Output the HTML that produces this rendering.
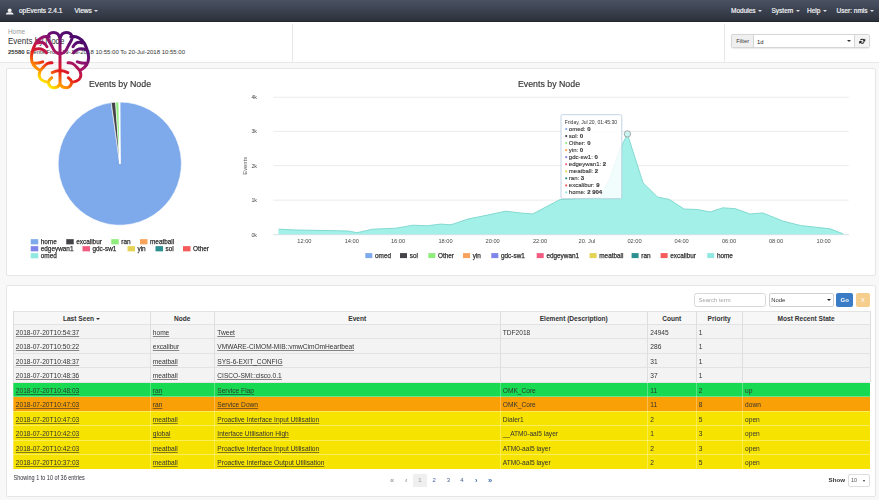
<!DOCTYPE html>
<html><head><meta charset="utf-8">
<style>
*{box-sizing:border-box;margin:0;padding:0}
html,body{width:879px;height:500px;overflow:hidden;background:#f8f8f8;font-family:"Liberation Sans",sans-serif;color:#333}
.a{position:absolute;white-space:nowrap}
#nav{position:absolute;left:0;top:0;width:879px;height:21.6px;background:linear-gradient(#4a5263,#2c313b);border-bottom:1.6px solid #22262e}
#nav .t{position:absolute;top:7.2px;color:#f2f3f5;font-size:6.5px;font-weight:normal;-webkit-text-stroke:0.2px #f2f3f5;white-space:nowrap;line-height:8px}
.caret{display:inline-block;width:0;height:0;border-left:2px solid transparent;border-right:2px solid transparent;border-top:2px solid #ddd;vertical-align:middle;margin-left:2.5px;margin-top:0px}
#hdr{position:absolute;left:0;top:22px;width:879px;height:40.5px;background:#fff;border-bottom:1px solid #e8e8e8}
.panel{position:absolute;background:#fff;border:1px solid #e6e6e6;border-radius:2px}
.row{position:absolute;left:13px;width:857px;height:14.5px}
.cell{position:absolute;top:0;height:100%;font-size:6.6px;line-height:14.5px;white-space:nowrap;color:#333}
.u{text-decoration:underline;text-decoration-color:rgba(40,40,40,0.55)}
.vl{position:absolute;width:1px;background:#dedede}
.hl{position:absolute;height:1px;left:13px;width:857px;background:#e0e0e0}
</style></head><body><div id="wrap" style="position:absolute;left:0;top:0;width:879px;height:500px;filter:blur(0.3px)">

<div id="nav">
<svg class="a" style="left:5px;top:7px" width="10" height="9" viewBox="0 0 10 9"><circle cx="4.7" cy="3.3" r="1.9" fill="#f0f0f0"/><path d="M0.8 7.6Q1 5.4 3.2 5.2h3Q8.4 5.4 8.7 7.6z" fill="#f0f0f0"/></svg>
<div class="t" style="left:19px">opEvents 2.4.1</div>
<div class="t" style="left:74.5px">Views<span class="caret"></span></div>
<div class="t" style="left:731px">Modules<span class="caret"></span></div>
<div class="t" style="left:771.5px">System<span class="caret"></span></div>
<div class="t" style="left:807px">Help<span class="caret"></span></div>
<div class="t" style="left:836.5px">User: nmis<span class="caret"></span></div>
</div>
<div id="hdr">
<div class="a" style="left:8px;top:6px;font-size:6.4px;color:#9a9a9a">Home</div>
<div class="a" style="left:8px;top:15px;font-size:8px;color:#333;transform:scaleY(1.18);transform-origin:0 80%">Events by Node</div>
<div class="a" style="left:8px;top:27.3px;font-size:6px;color:#333"><b>25580</b> Events From 19-Jul-2018 10:55:00 To 20-Jul-2018 10:55:00</div>
<div class="a" style="left:292px;top:2px;width:1px;height:38px;background:#e8e8e8"></div>
<div class="a" style="left:724px;top:2px;width:1px;height:38px;background:#e8e8e8"></div>
<div class="a" style="left:731px;top:12.4px;width:139px;height:13.9px;border:1px solid #d6d6d6;border-radius:2px;background:#fff;box-shadow:0 0.5px 1px rgba(0,0,0,.08)"></div>
<div class="a" style="left:732px;top:13.4px;width:21.5px;height:11.9px;background:#efefef;border-right:1px solid #d6d6d6"></div>
<div class="a" style="left:736.2px;top:15.9px;font-size:5.8px;color:#3a3a3a">Filter</div>
<div class="a" style="left:757px;top:16.6px;font-size:5.8px;color:#222">1d</div>
<div class="a" style="left:846.8px;top:18.3px;width:0;height:0;border-left:2px solid transparent;border-right:2px solid transparent;border-top:2.5px solid #333"></div>
<div class="a" style="left:854px;top:13.4px;width:15px;height:11.9px;background:#f4f4f4;border-left:1px solid #d6d6d6"></div>
<svg class="a" style="left:859px;top:16.4px" width="6.5" height="6.5" viewBox="0 0 10 10"><path d="M8.2 4.2A3.4 3.4 0 0 0 2.3 3.2M1.8 5.8A3.4 3.4 0 0 0 7.7 6.8" fill="none" stroke="#222" stroke-width="1.7"/><path d="M9.6 0.8v4.4H5.2zM0.4 9.2V4.8h4.4z" fill="#222"/></svg>
</div>
<div class="panel" style="left:5.8px;top:68px;width:870.5px;height:208px"></div>
<div class="panel" style="left:5.8px;top:285px;width:870.5px;height:212px"></div>
<svg class="a" style="left:0;top:0" width="879" height="500" viewBox="0 0 879 500" font-family="Liberation Sans">
<text x="120" y="87" font-size="8.8" fill="#333" stroke="#333" stroke-width="0.15" text-anchor="middle">Events by Node</text>
<path d="M119.8 163.6L119.80 102.00A61.6 61.6 0 1 1 111.23 102.60Z" fill="#7eaaec" stroke="#fff" stroke-width="0.6" stroke-linejoin="round"/>
<path d="M119.8 163.6L111.23 102.60A61.6 61.6 0 0 1 115.61 102.14Z" fill="#434348" stroke="#fff" stroke-width="0.6" stroke-linejoin="round"/>
<path d="M119.8 163.6L115.61 102.14A61.6 61.6 0 0 1 119.05 102.00Z" fill="#90ed7d" stroke="#fff" stroke-width="0.6" stroke-linejoin="round"/>
<path d="M119.8 163.6L119.05 102.00A61.6 61.6 0 0 1 119.26 102.00Z" fill="#f7a35c" stroke="#fff" stroke-width="0.6" stroke-linejoin="round"/>
<path d="M119.8 163.6L119.26 102.00A61.6 61.6 0 0 1 119.48 102.00Z" fill="#8085e9" stroke="#fff" stroke-width="0.6" stroke-linejoin="round"/>
<path d="M119.8 163.6L119.48 102.00A61.6 61.6 0 0 1 119.64 102.00Z" fill="#f15c80" stroke="#fff" stroke-width="0.6" stroke-linejoin="round"/>
<path d="M119.8 163.6L119.64 102.00A61.6 61.6 0 0 1 119.80 102.00Z" fill="#91e8e1" stroke="#fff" stroke-width="0.6" stroke-linejoin="round"/>
<rect x="30.75" y="239.15" width="7.5" height="5.2" fill="#7eaaec"/>
<text x="40.75" y="244.05" font-size="6.4" fill="#333" stroke="#333" stroke-width="0.25">home</text>
<rect x="66.25" y="239.15" width="7.5" height="5.2" fill="#434348"/>
<text x="76.25" y="244.05" font-size="6.4" fill="#333" stroke="#333" stroke-width="0.25">excalibur</text>
<rect x="111.25" y="239.15" width="7.5" height="5.2" fill="#90ed7d"/>
<text x="121.25" y="244.05" font-size="6.4" fill="#333" stroke="#333" stroke-width="0.25">ran</text>
<rect x="140" y="239.15" width="7.5" height="5.2" fill="#f7a35c"/>
<text x="150.00" y="244.05" font-size="6.4" fill="#333" stroke="#333" stroke-width="0.25">meatball</text>
<rect x="30.75" y="246.15" width="7.5" height="5.2" fill="#8085e9"/>
<text x="40.75" y="251.05" font-size="6.4" fill="#333" stroke="#333" stroke-width="0.25">edgeywan1</text>
<rect x="82.5" y="246.15" width="7.5" height="5.2" fill="#f15c80"/>
<text x="92.50" y="251.05" font-size="6.4" fill="#333" stroke="#333" stroke-width="0.25">gdc-sw1</text>
<rect x="127.5" y="246.15" width="7.5" height="5.2" fill="#e4d354"/>
<text x="137.50" y="251.05" font-size="6.4" fill="#333" stroke="#333" stroke-width="0.25">yin</text>
<rect x="155.5" y="246.15" width="7.5" height="5.2" fill="#2b908f"/>
<text x="165.50" y="251.05" font-size="6.4" fill="#333" stroke="#333" stroke-width="0.25">sol</text>
<rect x="183" y="246.15" width="7.5" height="5.2" fill="#f45b5b"/>
<text x="193.00" y="251.05" font-size="6.4" fill="#333" stroke="#333" stroke-width="0.25">Other</text>
<rect x="30.75" y="253.15" width="7.5" height="5.2" fill="#91e8e1"/>
<text x="40.75" y="258.05" font-size="6.4" fill="#333" stroke="#333" stroke-width="0.25">omed</text>
<text x="549" y="87" font-size="8.8" fill="#333" stroke="#333" stroke-width="0.15" text-anchor="middle">Events by Node</text>
<rect x="273.3" y="234.2" width="575.5" height="0.8" fill="#e6e6e6"/>
<text x="257" y="236.6" font-size="5.3" fill="#4a4a4a" text-anchor="end">0k</text>
<rect x="273.3" y="199.7" width="575.5" height="0.8" fill="#e6e6e6"/>
<text x="257" y="202.1" font-size="5.3" fill="#4a4a4a" text-anchor="end">1k</text>
<rect x="273.3" y="165.3" width="575.5" height="0.8" fill="#e6e6e6"/>
<text x="257" y="167.7" font-size="5.3" fill="#4a4a4a" text-anchor="end">2k</text>
<rect x="273.3" y="130.9" width="575.5" height="0.8" fill="#e6e6e6"/>
<text x="257" y="133.3" font-size="5.3" fill="#4a4a4a" text-anchor="end">3k</text>
<rect x="273.3" y="96.8" width="575.5" height="0.8" fill="#e6e6e6"/>
<text x="257" y="99.2" font-size="5.3" fill="#4a4a4a" text-anchor="end">4k</text>
<text transform="translate(246.5 165.8) rotate(-90)" font-size="5.8" fill="#555" text-anchor="middle">Events</text>
<path d="M278.3 234.7 L278.5 229.2 L297 230 L330 230.6 L348.5 231 L357 232.7 L372.4 229.2 L396 228.2 L413 225.2 L427 225.8 L440.6 224.1 L451 224.8 L468 219 L485 215.6 L505.5 211.2 L522.6 213.2 L532.8 213.9 L560 199.6 L600 197.5 L609.5 179 L619 151.6 L627.4 133.9 L643 182.7 L657.5 197 L669.5 199.5 L684 209 L697.6 209.5 L710 212 L722.8 207.8 L735.4 208.7 L750 214 L762.7 212.9 L783.7 221.3 L800.5 225.5 L830 228.8 L843.4 233.9 L843.4 234.7Z" fill="#a3f0e8"/>
<path d="M278.5 229.2 L297 230 L330 230.6 L348.5 231 L357 232.7 L372.4 229.2 L396 228.2 L413 225.2 L427 225.8 L440.6 224.1 L451 224.8 L468 219 L485 215.6 L505.5 211.2 L522.6 213.2 L532.8 213.9 L560 199.6 L600 197.5 L609.5 179 L619 151.6 L627.4 133.9 L643 182.7 L657.5 197 L669.5 199.5 L684 209 L697.6 209.5 L710 212 L722.8 207.8 L735.4 208.7 L750 214 L762.7 212.9 L783.7 221.3 L800.5 225.5 L830 228.8 L843.4 233.9" fill="none" stroke="#7ad6cc" stroke-width="0.9"/>
<rect x="273.3" y="234.4" width="575.5" height="0.8" fill="#d5dfea"/>
<text x="304.4" y="243.1" font-size="5.7" fill="#4a4a4a" text-anchor="middle">12:00</text>
<text x="351.8" y="243.1" font-size="5.7" fill="#4a4a4a" text-anchor="middle">14:00</text>
<text x="398" y="243.1" font-size="5.7" fill="#4a4a4a" text-anchor="middle">16:00</text>
<text x="445.5" y="243.1" font-size="5.7" fill="#4a4a4a" text-anchor="middle">18:00</text>
<text x="492.6" y="243.1" font-size="5.7" fill="#4a4a4a" text-anchor="middle">20:00</text>
<text x="540" y="243.1" font-size="5.7" fill="#4a4a4a" text-anchor="middle">22:00</text>
<text x="587" y="243.1" font-size="5.7" fill="#4a4a4a" text-anchor="middle">20. Jul</text>
<text x="634.5" y="243.1" font-size="5.7" fill="#4a4a4a" text-anchor="middle">02:00</text>
<text x="681.6" y="243.1" font-size="5.7" fill="#4a4a4a" text-anchor="middle">04:00</text>
<text x="729" y="243.1" font-size="5.7" fill="#4a4a4a" text-anchor="middle">06:00</text>
<text x="776" y="243.1" font-size="5.7" fill="#4a4a4a" text-anchor="middle">08:00</text>
<text x="823.6" y="243.1" font-size="5.7" fill="#4a4a4a" text-anchor="middle">10:00</text>
<rect x="365.3" y="253.1" width="7" height="5" fill="#7eaaec"/>
<text x="375.00" y="258.1" font-size="6.4" fill="#333" stroke="#333" stroke-width="0.25">omed</text>
<rect x="400" y="253.1" width="7" height="5" fill="#434348"/>
<text x="409.70" y="258.1" font-size="6.4" fill="#333" stroke="#333" stroke-width="0.25">sol</text>
<rect x="428.3" y="253.1" width="7" height="5" fill="#90ed7d"/>
<text x="438.00" y="258.1" font-size="6.4" fill="#333" stroke="#333" stroke-width="0.25">Other</text>
<rect x="463" y="253.1" width="7" height="5" fill="#f7a35c"/>
<text x="472.70" y="258.1" font-size="6.4" fill="#333" stroke="#333" stroke-width="0.25">yin</text>
<rect x="491.3" y="253.1" width="7" height="5" fill="#8085e9"/>
<text x="501.00" y="258.1" font-size="6.4" fill="#333" stroke="#333" stroke-width="0.25">gdc-sw1</text>
<rect x="536.7" y="253.1" width="7" height="5" fill="#f15c80"/>
<text x="546.40" y="258.1" font-size="6.4" fill="#333" stroke="#333" stroke-width="0.25">edgeywan1</text>
<rect x="589.6" y="253.1" width="7" height="5" fill="#e4d354"/>
<text x="599.30" y="258.1" font-size="6.4" fill="#333" stroke="#333" stroke-width="0.25">meatball</text>
<rect x="631.6" y="253.1" width="7" height="5" fill="#2b908f"/>
<text x="641.30" y="258.1" font-size="6.4" fill="#333" stroke="#333" stroke-width="0.25">ran</text>
<rect x="660.6" y="253.1" width="7" height="5" fill="#f45b5b"/>
<text x="670.30" y="258.1" font-size="6.4" fill="#333" stroke="#333" stroke-width="0.25">excalibur</text>
<rect x="707.2" y="253.1" width="7" height="5" fill="#91e8e1"/>
<text x="716.90" y="258.1" font-size="6.4" fill="#333" stroke="#333" stroke-width="0.25">home</text>
<circle cx="627.4" cy="133.9" r="3.2" fill="#c9f3ef" stroke="#8a8a8a" stroke-width="0.7"/>
<rect x="561" y="114.7" width="60.8" height="84" rx="1.5" fill="#fff" fill-opacity="0.85" stroke="#a9c3d9" stroke-width="0.7"/>
<text x="564.7" y="124" font-size="5.05" fill="#333">Friday, Jul 20, 01:45:30</text>
<circle cx="566.2" cy="129.00" r="1.1" fill="#7eaaec"/>
<text x="568.8" y="131.00" font-size="6" fill="#333" stroke="#333" stroke-width="0.12">omed: <tspan font-weight="bold">0</tspan></text>
<circle cx="566.2" cy="136.05" r="1.1" fill="#434348"/>
<text x="568.8" y="138.05" font-size="6" fill="#333" stroke="#333" stroke-width="0.12">sol: <tspan font-weight="bold">0</tspan></text>
<circle cx="566.2" cy="143.10" r="1.1" fill="#90ed7d"/>
<text x="568.8" y="145.10" font-size="6" fill="#333" stroke="#333" stroke-width="0.12">Other: <tspan font-weight="bold">0</tspan></text>
<circle cx="566.2" cy="150.15" r="1.1" fill="#f7a35c"/>
<text x="568.8" y="152.15" font-size="6" fill="#333" stroke="#333" stroke-width="0.12">yin: <tspan font-weight="bold">0</tspan></text>
<circle cx="566.2" cy="157.20" r="1.1" fill="#8085e9"/>
<text x="568.8" y="159.20" font-size="6" fill="#333" stroke="#333" stroke-width="0.12">gdc-sw1: <tspan font-weight="bold">0</tspan></text>
<circle cx="566.2" cy="164.25" r="1.1" fill="#f15c80"/>
<text x="568.8" y="166.25" font-size="6" fill="#333" stroke="#333" stroke-width="0.12">edgeywan1: <tspan font-weight="bold">2</tspan></text>
<circle cx="566.2" cy="171.30" r="1.1" fill="#e4d354"/>
<text x="568.8" y="173.30" font-size="6" fill="#333" stroke="#333" stroke-width="0.12">meatball: <tspan font-weight="bold">2</tspan></text>
<circle cx="566.2" cy="178.35" r="1.1" fill="#2b908f"/>
<text x="568.8" y="180.35" font-size="6" fill="#333" stroke="#333" stroke-width="0.12">ran: <tspan font-weight="bold">3</tspan></text>
<circle cx="566.2" cy="185.40" r="1.1" fill="#f45b5b"/>
<text x="568.8" y="187.40" font-size="6" fill="#333" stroke="#333" stroke-width="0.12">excalibur: <tspan font-weight="bold">9</tspan></text>
<circle cx="566.2" cy="192.45" r="1.1" fill="#91e8e1"/>
<text x="568.8" y="194.45" font-size="6" fill="#333" stroke="#333" stroke-width="0.12">home: <tspan font-weight="bold">2 904</tspan></text>
</svg>
<div class="a" style="left:13px;top:311px;width:857px;height:13px;background:#f7f7f7"></div>
<div class="cell" style="left:13px;width:137px;top:311.5px;height:13px;line-height:13px;text-align:center;font-weight:bold">Last Seen<span class="caret" style="border-top-color:#333;margin-left:2px"></span></div>
<div class="cell" style="left:150px;width:64.5px;top:311.5px;height:13px;line-height:13px;text-align:center;font-weight:bold">Node</div>
<div class="cell" style="left:214.5px;width:285.5px;top:311.5px;height:13px;line-height:13px;text-align:center;font-weight:bold">Event</div>
<div class="cell" style="left:500px;width:147.5px;top:311.5px;height:13px;line-height:13px;text-align:center;font-weight:bold">Element (Description)</div>
<div class="cell" style="left:647.5px;width:48.5px;top:311.5px;height:13px;line-height:13px;text-align:center;font-weight:bold">Count</div>
<div class="cell" style="left:696px;width:46.299999999999955px;top:311.5px;height:13px;line-height:13px;text-align:center;font-weight:bold">Priority</div>
<div class="cell" style="left:742.3px;width:127.70000000000005px;top:311.5px;height:13px;line-height:13px;text-align:center;font-weight:bold">Most Recent State</div>
<div class="a" style="left:13px;top:324.0px;width:857px;height:14.5px;background:#f3f3f3"></div>
<div class="cell u" style="left:15.8px;top:325.7px">2018-07-20T10:54:37</div>
<div class="cell u" style="left:152.8px;top:325.7px">home</div>
<div class="cell u" style="left:217.3px;top:325.7px">Tweet</div>
<div class="cell" style="left:502.8px;top:325.7px">TDF2018</div>
<div class="cell" style="left:650.3px;top:325.7px">24945</div>
<div class="cell" style="left:698.8px;top:325.7px">1</div>
<div class="a" style="left:13px;top:338.5px;width:857px;height:14.5px;background:#f3f3f3"></div>
<div class="cell u" style="left:15.8px;top:340.2px">2018-07-20T10:50:22</div>
<div class="cell u" style="left:152.8px;top:340.2px">excalibur</div>
<div class="cell u" style="left:217.3px;top:340.2px">VMWARE-CIMOM-MIB::vmwCimOmHeartbeat</div>
<div class="cell" style="left:650.3px;top:340.2px">286</div>
<div class="cell" style="left:698.8px;top:340.2px">1</div>
<div class="a" style="left:13px;top:353.0px;width:857px;height:14.5px;background:#f3f3f3"></div>
<div class="cell u" style="left:15.8px;top:354.7px">2018-07-20T10:48:37</div>
<div class="cell u" style="left:152.8px;top:354.7px">meatball</div>
<div class="cell u" style="left:217.3px;top:354.7px">SYS-6-EXIT_CONFIG</div>
<div class="cell" style="left:650.3px;top:354.7px">31</div>
<div class="cell" style="left:698.8px;top:354.7px">1</div>
<div class="a" style="left:13px;top:367.5px;width:857px;height:14.5px;background:#f3f3f3"></div>
<div class="cell u" style="left:15.8px;top:369.2px">2018-07-20T10:48:36</div>
<div class="cell u" style="left:152.8px;top:369.2px">meatball</div>
<div class="cell u" style="left:217.3px;top:369.2px">CISCO-SMI::cisco.0.1</div>
<div class="cell" style="left:650.3px;top:369.2px">37</div>
<div class="cell" style="left:698.8px;top:369.2px">1</div>
<div class="a" style="left:13px;top:382.0px;width:857px;height:14.5px;background:#17d952"></div>
<div class="cell u" style="left:15.8px;top:383.7px">2018-07-20T10:48:03</div>
<div class="cell u" style="left:152.8px;top:383.7px">ran</div>
<div class="cell u" style="left:217.3px;top:383.7px">Service Flap</div>
<div class="cell" style="left:502.8px;top:383.7px">OMK_Core</div>
<div class="cell" style="left:650.3px;top:383.7px">11</div>
<div class="cell" style="left:698.8px;top:383.7px">2</div>
<div class="cell" style="left:745.0999999999999px;top:383.7px">up</div>
<div class="a" style="left:13px;top:396.5px;width:857px;height:14.5px;background:#f8a006"></div>
<div class="cell u" style="left:15.8px;top:398.2px">2018-07-20T10:47:03</div>
<div class="cell u" style="left:152.8px;top:398.2px">ran</div>
<div class="cell u" style="left:217.3px;top:398.2px">Service Down</div>
<div class="cell" style="left:502.8px;top:398.2px">OMK_Core</div>
<div class="cell" style="left:650.3px;top:398.2px">11</div>
<div class="cell" style="left:698.8px;top:398.2px">8</div>
<div class="cell" style="left:745.0999999999999px;top:398.2px">down</div>
<div class="a" style="left:13px;top:411.0px;width:857px;height:14.5px;background:#f6e300"></div>
<div class="cell u" style="left:15.8px;top:412.7px">2018-07-20T10:47:03</div>
<div class="cell u" style="left:152.8px;top:412.7px">meatball</div>
<div class="cell u" style="left:217.3px;top:412.7px">Proactive Interface Input Utilisation</div>
<div class="cell" style="left:502.8px;top:412.7px">Dialer1</div>
<div class="cell" style="left:650.3px;top:412.7px">2</div>
<div class="cell" style="left:698.8px;top:412.7px">5</div>
<div class="cell" style="left:745.0999999999999px;top:412.7px">open</div>
<div class="a" style="left:13px;top:425.5px;width:857px;height:14.5px;background:#f6e300"></div>
<div class="cell u" style="left:15.8px;top:427.2px">2018-07-20T10:42:03</div>
<div class="cell u" style="left:152.8px;top:427.2px">global</div>
<div class="cell u" style="left:217.3px;top:427.2px">Interface Utilisation High</div>
<div class="cell" style="left:502.8px;top:427.2px">__ATM0-aal5 layer</div>
<div class="cell" style="left:650.3px;top:427.2px">1</div>
<div class="cell" style="left:698.8px;top:427.2px">3</div>
<div class="cell" style="left:745.0999999999999px;top:427.2px">open</div>
<div class="a" style="left:13px;top:440.0px;width:857px;height:14.5px;background:#f6e300"></div>
<div class="cell u" style="left:15.8px;top:441.7px">2018-07-20T10:42:03</div>
<div class="cell u" style="left:152.8px;top:441.7px">meatball</div>
<div class="cell u" style="left:217.3px;top:441.7px">Proactive Interface Input Utilisation</div>
<div class="cell" style="left:502.8px;top:441.7px">ATM0-aal5 layer</div>
<div class="cell" style="left:650.3px;top:441.7px">2</div>
<div class="cell" style="left:698.8px;top:441.7px">3</div>
<div class="cell" style="left:745.0999999999999px;top:441.7px">open</div>
<div class="a" style="left:13px;top:454.5px;width:857px;height:14.5px;background:#f6e300"></div>
<div class="cell u" style="left:15.8px;top:456.2px">2018-07-20T10:37:03</div>
<div class="cell u" style="left:152.8px;top:456.2px">meatball</div>
<div class="cell u" style="left:217.3px;top:456.2px">Proactive Interface Output Utilisation</div>
<div class="cell" style="left:502.8px;top:456.2px">ATM0-aal5 layer</div>
<div class="cell" style="left:650.3px;top:456.2px">2</div>
<div class="cell" style="left:698.8px;top:456.2px">5</div>
<div class="cell" style="left:745.0999999999999px;top:456.2px">open</div>
<div class="hl" style="top:310.5px;background:#e3e3e3"></div>
<div class="hl" style="top:323.5px;background:#e3e3e3"></div>
<div class="hl" style="top:338.0px;background:#e3e3e3"></div>
<div class="hl" style="top:352.5px;background:#e3e3e3"></div>
<div class="hl" style="top:367.0px;background:#e3e3e3"></div>
<div class="hl" style="top:381.5px;background:#e3e3e3"></div>
<div class="hl" style="top:396.0px;background:rgba(255,255,255,0.35)"></div>
<div class="hl" style="top:410.5px;background:rgba(255,255,255,0.35)"></div>
<div class="hl" style="top:425.0px;background:rgba(255,255,255,0.35)"></div>
<div class="hl" style="top:439.5px;background:rgba(255,255,255,0.35)"></div>
<div class="hl" style="top:454.0px;background:rgba(255,255,255,0.35)"></div>
<div class="hl" style="top:468.5px;background:rgba(255,255,255,0.35)"></div>
<div class="vl" style="left:12.5px;top:311px;height:71px"></div>
<div class="vl" style="left:12.5px;top:382px;height:87px;background:rgba(255,255,255,0.3)"></div>
<div class="vl" style="left:149.5px;top:311px;height:71px"></div>
<div class="vl" style="left:149.5px;top:382px;height:87px;background:rgba(255,255,255,0.3)"></div>
<div class="vl" style="left:214.0px;top:311px;height:71px"></div>
<div class="vl" style="left:214.0px;top:382px;height:87px;background:rgba(255,255,255,0.3)"></div>
<div class="vl" style="left:499.5px;top:311px;height:71px"></div>
<div class="vl" style="left:499.5px;top:382px;height:87px;background:rgba(255,255,255,0.3)"></div>
<div class="vl" style="left:647.0px;top:311px;height:71px"></div>
<div class="vl" style="left:647.0px;top:382px;height:87px;background:rgba(255,255,255,0.3)"></div>
<div class="vl" style="left:695.5px;top:311px;height:71px"></div>
<div class="vl" style="left:695.5px;top:382px;height:87px;background:rgba(255,255,255,0.3)"></div>
<div class="vl" style="left:741.8px;top:311px;height:71px"></div>
<div class="vl" style="left:741.8px;top:382px;height:87px;background:rgba(255,255,255,0.3)"></div>
<div class="vl" style="left:869.5px;top:311px;height:71px"></div>
<div class="vl" style="left:869.5px;top:382px;height:87px;background:rgba(255,255,255,0.3)"></div>
<div class="a" style="left:694.3px;top:293.4px;width:71.5px;height:13.5px;border:1px solid #d8d8d8;border-radius:2.5px;background:#fff"></div>
<div class="a" style="left:698.6px;top:296.6px;font-size:5.9px;color:#a5a5a5">Search term</div>
<div class="a" style="left:768.5px;top:293.4px;width:65.2px;height:13.5px;border:1px solid #d0d0d0;border-radius:2px;background:#fff"></div>
<div class="a" style="left:771.3px;top:297px;font-size:5.9px;color:#333">Node</div>
<div class="a" style="left:826.7px;top:299.3px;width:0;height:0;border-left:2px solid transparent;border-right:2px solid transparent;border-top:2.5px solid #222"></div>
<div class="a" style="left:836.2px;top:292.7px;width:17.2px;height:14.2px;background:#3b7cc6;border-radius:2px;color:#fff;font-size:6px;font-weight:bold;text-align:center;line-height:14.2px">Go</div>
<div class="a" style="left:856px;top:292.7px;width:13.6px;height:14.2px;background:#f5ce8e;border-radius:2px;color:#fff;font-size:6px;text-align:center;line-height:14.2px">X</div>
<div class="a" style="left:13.5px;top:475.4px;font-size:5.5px;color:#2e2e38;transform:scaleY(1.15);transform-origin:0 70%">Showing 1 to 10 of 36 entries</div>
<div class="a" style="left:412.5px;top:473.5px;width:14.5px;height:13.5px;background:#efefef;border-radius:1px"></div>
<div class="a" style="left:386px;top:475.5px;width:12px;text-align:center;font-size:7.5px;font-weight:bold;color:#a0a0a0">&laquo;</div>
<div class="a" style="left:400.3px;top:475.5px;width:12px;text-align:center;font-size:7.5px;font-weight:bold;color:#a0a0a0">&lsaquo;</div>
<div class="a" style="left:414px;top:476.8px;width:12px;text-align:center;font-size:6px;color:#999">1</div>
<div class="a" style="left:428.2px;top:476.8px;width:12px;text-align:center;font-size:6px;color:#4a62a8">2</div>
<div class="a" style="left:442.3px;top:476.8px;width:12px;text-align:center;font-size:6px;color:#4a5c8c">3</div>
<div class="a" style="left:456px;top:476.8px;width:12px;text-align:center;font-size:6px;color:#4a5c8c">4</div>
<div class="a" style="left:470.2px;top:475.5px;width:12px;text-align:center;font-size:7.5px;font-weight:bold;color:#3a6ea8">&rsaquo;</div>
<div class="a" style="left:484px;top:475.5px;width:12px;text-align:center;font-size:7.5px;font-weight:bold;color:#3a6ea8">&raquo;</div>
<div class="a" style="left:828.5px;top:476px;font-size:6.2px;font-weight:bold;color:#333">Show</div>
<div class="a" style="left:847.5px;top:473.5px;width:22px;height:13.5px;border:1px solid #ddd;border-radius:2px;background:#fff"></div>
<div class="a" style="left:851px;top:477px;font-size:5.5px;color:#555">10</div>
<div class="a" style="left:863px;top:479.5px;width:0;height:0;border-left:1.8px solid transparent;border-right:1.8px solid transparent;border-top:2.2px solid #333"></div>

<svg class="a" style="left:0;top:0;pointer-events:none" width="879" height="500" viewBox="0 0 879 500">
<defs><linearGradient id="bg" gradientUnits="userSpaceOnUse" x1="75.4" y1="37.4" x2="41.7" y2="86.9">
<stop offset="0" stop-color="#4e0a6a"/><stop offset="0.12" stop-color="#5c0e72"/><stop offset="0.35" stop-color="#a0136c"/><stop offset="0.6" stop-color="#e31a1c"/><stop offset="0.79" stop-color="#ff9000"/><stop offset="0.92" stop-color="#ffe800"/><stop offset="1" stop-color="#fff200"/></linearGradient></defs>
<g fill="none" stroke="url(#bg)" stroke-width="3.0" stroke-linecap="round" stroke-linejoin="round">
<path d="M60 36 V84 M60.3 38 C61 33.8 64 32.4 66.5 32.4 C70 32.4 72.6 35 72 38.5 C71.5 41 69 44 67.5 47.5 C66 51 63.5 53.5 60.3 54 M70.8 36.8 C76 35.5 82 38.5 84.5 43.5 C86.5 47.5 88.6 53 88.6 57.8 C88.6 63 86 67.5 79.8 70.6 M82 43 C79 41.5 75.5 42.5 73 46.8 M86 49.8 C82 48.3 77 48.5 73.5 52.8 M79.8 70.6 C81 73.5 81 77.5 79 79.5 C77 81.3 74 82 71.9 82.4 C71 85.5 69 87.7 66.5 87.7 C63.5 87.7 61 86 60 84 M87 63.3 C84 63.4 80.5 63 77.3 61.8 M80 70.6 C77.5 68.5 75.5 65 72.5 63.5 C71 62.8 69.5 62.7 68 62.8 M71.9 82.4 C71 80.5 69.8 78.8 68.3 77.8 M60 70.6 C63 70.8 65.5 71.5 67.8 72.6 M 59.70 38 C 59.00 33.8 56.00 32.4 53.50 32.4 C 50.00 32.4 47.40 35 48.00 38.5 C 48.50 41 51.00 44 52.50 47.5 C 54.00 51 56.50 53.5 59.70 54 M 49.20 36.8 C 44.00 35.5 38.00 38.5 35.50 43.5 C 33.50 47.5 31.40 53 31.40 57.8 C 31.40 63 34.00 67.5 40.20 70.6 M 38.00 43 C 41.00 41.5 44.50 42.5 47.00 46.8 M 34.00 49.8 C 38.00 48.3 43.00 48.5 46.50 52.8 M 40.20 70.6 C 39.00 73.5 39.00 77.5 41.00 79.5 C 43.00 81.3 46.00 82 48.10 82.4 C 49.00 85.5 51.00 87.7 53.50 87.7 C 56.50 87.7 59.00 86 60.00 84 M 33.00 63.3 C 36.00 63.4 39.50 63 42.70 61.8 M 40.00 70.6 C 42.50 68.5 44.50 65 47.50 63.5 C 49.00 62.8 50.50 62.7 52.00 62.8 M 48.10 82.4 C 49.00 80.5 50.20 78.8 51.70 77.8 M 60.00 70.6 C 57.00 70.8 54.50 71.5 52.20 72.6"/>
</g></svg>
</div></body></html>
